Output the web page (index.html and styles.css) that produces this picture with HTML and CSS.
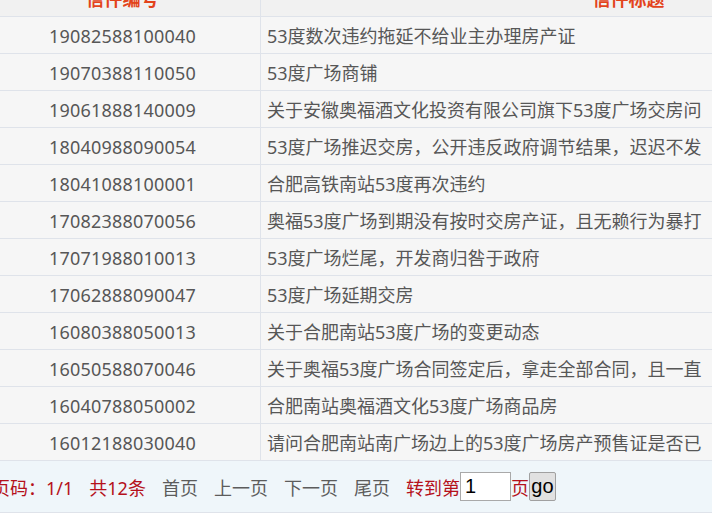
FILE: index.html
```html
<!DOCTYPE html>
<html lang="zh-CN">
<head>
<meta charset="utf-8">
<title>信件列表</title>
<link rel="stylesheet" href="styles.css">
</head>
<body>
<div class="viewport">
  <div class="list">
    <div class="row head">
      <div class="cell num">信件编号</div>
      <div class="cell title">信件标题</div>
    </div>
    <div class="row"><div class="cell num">19082588100040</div><div class="cell title">53度数次违约拖延不给业主办理房产证</div></div>
    <div class="row"><div class="cell num">19070388110050</div><div class="cell title">53度广场商铺</div></div>
    <div class="row"><div class="cell num">19061888140009</div><div class="cell title">关于安徽奥福酒文化投资有限公司旗下53度广场交房问</div></div>
    <div class="row"><div class="cell num">18040988090054</div><div class="cell title">53度广场推迟交房，公开违反政府调节结果，迟迟不发</div></div>
    <div class="row"><div class="cell num">18041088100001</div><div class="cell title">合肥高铁南站53度再次违约</div></div>
    <div class="row"><div class="cell num">17082388070056</div><div class="cell title">奥福53度广场到期没有按时交房产证，且无赖行为暴打</div></div>
    <div class="row"><div class="cell num">17071988010013</div><div class="cell title">53度广场烂尾，开发商归咎于政府</div></div>
    <div class="row"><div class="cell num">17062888090047</div><div class="cell title">53度广场延期交房</div></div>
    <div class="row"><div class="cell num">16080388050013</div><div class="cell title">关于合肥南站53度广场的变更动态</div></div>
    <div class="row"><div class="cell num">16050588070046</div><div class="cell title">关于奥福53度广场合同签定后，拿走全部合同，且一直</div></div>
    <div class="row"><div class="cell num">16040788050002</div><div class="cell title">合肥南站奥福酒文化53度广场商品房</div></div>
    <div class="row"><div class="cell num">16012188030040</div><div class="cell title">请问合肥南站南广场边上的53度广场房产预售证是否已</div></div>
    <div class="pager">
      <span class="red">页码：1/1</span>
      <span class="red">共12条</span>
      <a class="link">首页</a>
      <a class="link">上一页</a>
      <a class="link">下一页</a>
      <a class="link">尾页</a>
      <span class="jump"><span class="red">转到第</span><input class="page-input" type="text" value="1"><span class="red">页</span><button class="go" type="button">go</button></span>
    </div>
  </div>
</div>
</body>
</html>
```

FILE: styles.css
```css
html, body {
  margin: 0;
  padding: 0;
  background: #ffffff;
}

.viewport {
  width: 712px;
  height: 527px;
  overflow: hidden;
}

.list {
  width: 1010px;
  margin-left: -14px;
  margin-top: -20px;
  font-family: "Noto Sans", "Noto Sans CJK SC", sans-serif;
  font-size: 18px;
  color: #575757;
}

.row {
  display: grid;
  grid-template-columns: 275px 1fr;
  border-bottom: 1px solid #dfe3ea;
  background: #f6f6f6;
}

.cell {
  height: 36px;
  line-height: 38px;
  white-space: nowrap;
  overflow: hidden;
}

.num {
  text-align: center;
  border-right: 1px solid #dfe3ea;
  padding-right: 1px;
  letter-spacing: 0.2px;
}

.title {
  padding-left: 6px;
}

.head {
  background: #f1f1f1;
}

.head .cell {
  font-weight: bold;
  color: #e3431b;
}

.head .title {
  text-align: center;
  padding-left: 0;
}

.pager {
  display: flex;
  align-items: center;
  gap: 16px;
  height: 51px;
  padding-left: 6px;
  background: #eff6fa;
  border-bottom: 1px solid #dfe3ea;
}

.red {
  color: #b5111b;
}

.link {
  color: #5c5c5c;
  text-decoration: none;
}

.jump {
  display: flex;
  align-items: center;
}

.page-input {
  box-sizing: border-box;
  width: 51px;
  height: 29px;
  margin: 0;
  padding: 0 4px;
  border: 1px solid #a9a9a9;
  background: #ffffff;
  font-family: "Liberation Sans", Arial, sans-serif;
  font-size: 20px;
  color: #000000;
  outline: none;
}

.go {
  box-sizing: border-box;
  width: 27px;
  height: 29px;
  margin: 0;
  padding: 0;
  border: 1px solid #a0a0a0;
  border-radius: 2px;
  background: #e1e1e1;
  font-family: "Liberation Sans", Arial, sans-serif;
  font-size: 20px;
  color: #000000;
}
```
